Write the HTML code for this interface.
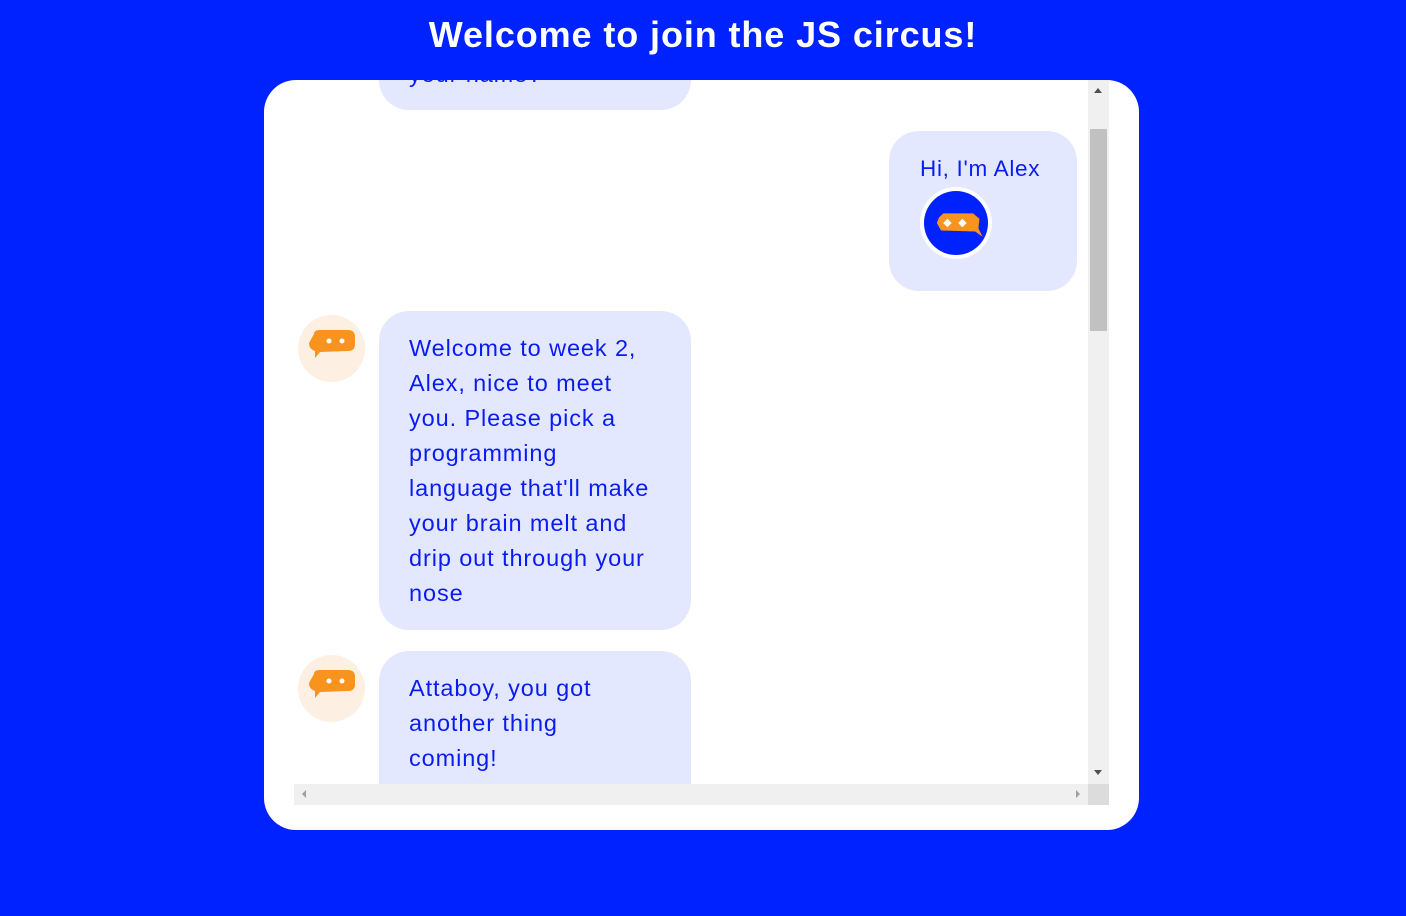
<!DOCTYPE html>
<html><head><style>
body{margin:0;background:#0022ff;width:1406px;height:916px;overflow:hidden;font-family:"Liberation Sans",sans-serif;position:relative}
h1{position:absolute;top:14px;left:0;width:1406px;text-align:center;margin:0;color:#fff;font-size:36px;font-weight:bold;letter-spacing:0.9px}
.card{position:absolute;left:264px;top:80px;width:875px;height:750px;background:#fff;border-radius:32px;overflow:hidden}
.view{position:absolute;left:30px;top:0;width:794px;height:704px;overflow:hidden}
.b{position:absolute;background:#e4e8ff;border-radius:30px;color:#0a1cf0;font-size:23.5px;letter-spacing:0.9px;line-height:35px;box-sizing:border-box;padding:20px 30px;white-space:nowrap}
.av{position:absolute;width:67px;height:67px;border-radius:50%;background:#fdf0e2}
.vs{position:absolute;left:824px;top:0;width:21px;height:704px;background:#f0f0f0}
.hs{position:absolute;left:30px;top:704px;width:794px;height:21px;background:#f0f0f0}
.corner{position:absolute;left:824px;top:704px;width:21px;height:21px;background:#dcdcdc}
</style></head><body>
<h1>Welcome to join the JS circus!</h1>
<div class="card">
<div class="view">
 <div class="b" style="left:85px;top:-60px;width:312px;height:90px;padding-top:37px">your name?</div>
 <div class="b" style="left:595px;top:51px;width:188px;height:160px;padding:20px 31px;font-size:22.5px;letter-spacing:0.7px">Hi, I'm Alex
  <div style="position:absolute;left:31px;top:56px;width:72px;height:72px;border-radius:50%;background:#fff"><div style="position:absolute;left:4px;top:4px;width:64px;height:64px;border-radius:50%;background:#0022ff">
   <svg width="64" height="64" viewBox="0 0 60 60" style="position:absolute;left:0;top:0"><path d="M14 25 L18 21 L46 21 L52 26 L51 35 L55 43 L48 38 L16 37 L12 30 Z" fill="#f7931e"/><path d="M22 26 L26 30 L22 34 L18 30Z M36 26 L40 30 L36 34 L32 30Z" fill="#fff"/></svg></div></div>
 </div>
 <div class="av" style="left:4px;top:235px"><svg width="67" height="67"><path d="M16 19 Q16 15 22 15 L50 15 Q57 15 57 22 L57 29 Q57 36 50 36 L22 37 L17 43 L17 36 Q11 34 11 28 Z" fill="#f7931e"/><circle cx="31" cy="26" r="2.5" fill="#fff"/><circle cx="44" cy="26" r="2.5" fill="#fff"/></svg></div>
 <div class="b" style="left:85px;top:231px;width:312px;height:319px">Welcome to week 2,<br>Alex, nice to meet<br>you. Please pick a<br>programming<br>language that'll make<br>your brain melt and<br>drip out through your<br>nose</div>
 <div class="av" style="left:4px;top:575px"><svg width="67" height="67"><path d="M16 19 Q16 15 22 15 L50 15 Q57 15 57 22 L57 29 Q57 36 50 36 L22 37 L17 43 L17 36 Q11 34 11 28 Z" fill="#f7931e"/><circle cx="31" cy="26" r="2.5" fill="#fff"/><circle cx="44" cy="26" r="2.5" fill="#fff"/></svg></div>
 <div class="b" style="left:85px;top:571px;width:312px;height:180px">Attaboy, you got<br>another thing<br>coming!</div>
</div>
<div class="vs"><div style="position:absolute;left:2px;top:49px;width:17px;height:202px;background:#c1c1c1"></div>
<div style="position:absolute;left:6px;top:8px;border:4px solid transparent;border-bottom:5px solid #505050;border-top:0"></div>
<div style="position:absolute;left:6px;top:690px;border:4px solid transparent;border-top:5px solid #505050;border-bottom:0"></div></div>
<div class="hs"><div style="position:absolute;left:8px;top:6px;border:4px solid transparent;border-right:4px solid #a0a0a0;border-left:0"></div><div style="position:absolute;right:8px;top:6px;border:4px solid transparent;border-left:4px solid #a0a0a0;border-right:0"></div></div>
<div class="corner"></div>
</div>
</body></html>
